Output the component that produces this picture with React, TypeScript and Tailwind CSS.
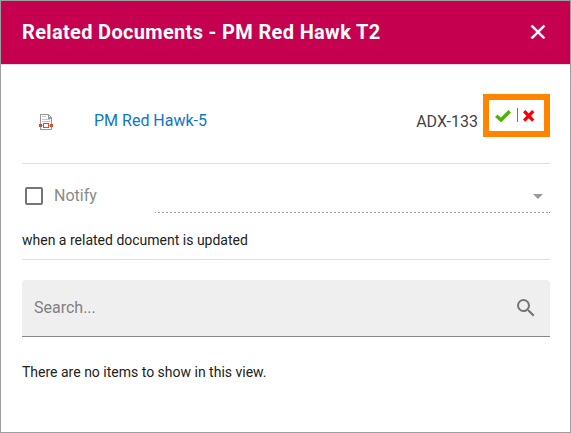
function DocumentIcon() {
  return (
    <svg width="14" height="16" viewBox="0 0 14 16" className="block" shapeRendering="crispEdges">
      <path d="M1 0h9v1H2v14h10V4h1v12H1z" fill="#999" />
      <path d="M9 0h1v1h1v1h1v1h1v2H9z" fill="#999" />
      <path d="M10 2h1v1h-1z" fill="#fff" />
      <path d="M3 2h4v1H3zM3 5h8v1H3zM3 7h8v1H3z" fill="#c8c8c8" />
      <path d="M0 10h3v3H0zM11 10h3v3h-3z" fill="#d6502e" />
      <path d="M3 11h8v1H3z" fill="#e9a08c" />
      <path d="M4 9h6v5H4z" fill="#d6502e" />
      <path d="M5 10h4v3H5z" fill="#fff" />
    </svg>
  );
}

function Header() {
  return (
    <header className="flex h-[64px] items-center justify-between border-b border-[#dedede] bg-[#c5004f] pr-5 pl-[21px]">
      <h1 className="-mt-[2px] text-[20px] leading-6 font-bold tracking-[0.33px] text-white">
        Related Documents - PM Red Hawk T2
      </h1>
      <button aria-label="Close" className="-mt-[2px] block size-6">
        <svg width="24" height="24" viewBox="0 0 24 24" fill="#fff" stroke="#fff" strokeWidth=".5">
          <path d="M19 6.410 17.590 5 12 10.590 6.410 5 5 6.410 10.590 12 5 17.590 6.410 19 12 13.410 17.590 19 19 17.590 13.410 12z" />
        </svg>
      </button>
    </header>
  );
}

function DocumentRow() {
  return (
    <div className="flex h-[99px] items-start border-b border-[#dedede] pl-[17px]">
      <div className="mt-[49px]">
        <DocumentIcon />
      </div>
      <a className="mt-[44px] ml-[41px] text-base text-[#0c77c4]">PM Red Hawk-5</a>
      <span className="mt-[45px] ml-auto text-base text-[#444]">ADX-133</span>
      <div className="mt-[29px] ml-[5px] flex h-[43px] w-[67px] items-start border-6 border-[#ff8400] pl-[6px]">
        <svg width="16" height="12" viewBox="0 0 16 12" className="mt-[10px]">
          <path d="M1.300 5.800 6 10 14.700 1.300" fill="none" stroke="#4fb400" strokeWidth="3.500" />
        </svg>
        <span className="mt-[8px] ml-[6px] h-[14px] w-px bg-[#777]" />
        <svg width="12" height="12" viewBox="0 0 12 12" className="mt-[10px] ml-[5px]">
          <path d="M1.200 1.200 10.200 10.600M10.200 1.200 1.200 10.600" fill="none" stroke="#f80008" strokeWidth="3.300" />
        </svg>
      </div>
    </div>
  );
}

function NotifySection() {
  return (
    <section className="h-[96px] border-b border-[#dedede]">
      <div className="flex h-[49px] items-start">
        <div className="mt-[23px] ml-[3px] size-[18px] rounded-[2px] border-2 border-[#757575]" />
        <span className="mt-[20px] ml-[11px] text-base text-[#8a8a8a]">Notify</span>
        <div className="ml-auto flex h-[49px] w-[395px] flex-col">
          <svg width="10" height="5" viewBox="0 0 10 5" className="mt-[30px] mr-[7px] self-end">
            <path d="M0 0h10L5 5z" fill="#999" />
          </svg>
          <div className="mt-auto flex h-px">
            <div className="flex-1 bg-[repeating-linear-gradient(to_right,#999_0_1px,transparent_1px_3px,#999_3px_4px)]" />
            <div className="w-px bg-[#999]" />
          </div>
        </div>
      </div>
      <p className="mt-[17px] text-sm text-[#222]">when a related document is updated</p>
    </section>
  );
}

function SearchBox() {
  return (
    <div className="mt-5 flex h-[57px] items-center justify-between rounded-t-[4px] border-b border-[#888] bg-[#efefef] pr-3 pl-3">
      <input
        placeholder="Search..."
        className="h-6 w-60 bg-transparent text-base text-[#222] outline-none placeholder:text-[#808080]"
      />
      <svg width="24" height="24" viewBox="0 0 24 24" fill="#757575">
        <path d="M15.500 14h-.79l-.28-.27A6.471 6.471 0 0 0 16 9.500 6.500 6.500 0 1 0 9.500 16c1.610 0 3.090-.59 4.230-1.570l.27.28v.79l5 4.990L20.490 19zm-6 0C7.010 14 5 11.990 5 9.500S7.010 5 9.500 5 14 7.010 14 9.500 11.990 14 9.500 14" />
      </svg>
    </div>
  );
}

export default function App() {
  return (
    <div className="flex h-[433px] w-[571px] flex-col border border-[#9e9e9e] bg-white font-[Roboto,sans-serif]">
      <Header />
      <main className="mr-5 ml-[21px] flex flex-col">
        <DocumentRow />
        <NotifySection />
        <SearchBox />
        <p className="mt-[25px] text-sm text-[#222]">There are no items to show in this view.</p>
      </main>
    </div>
  );
}
